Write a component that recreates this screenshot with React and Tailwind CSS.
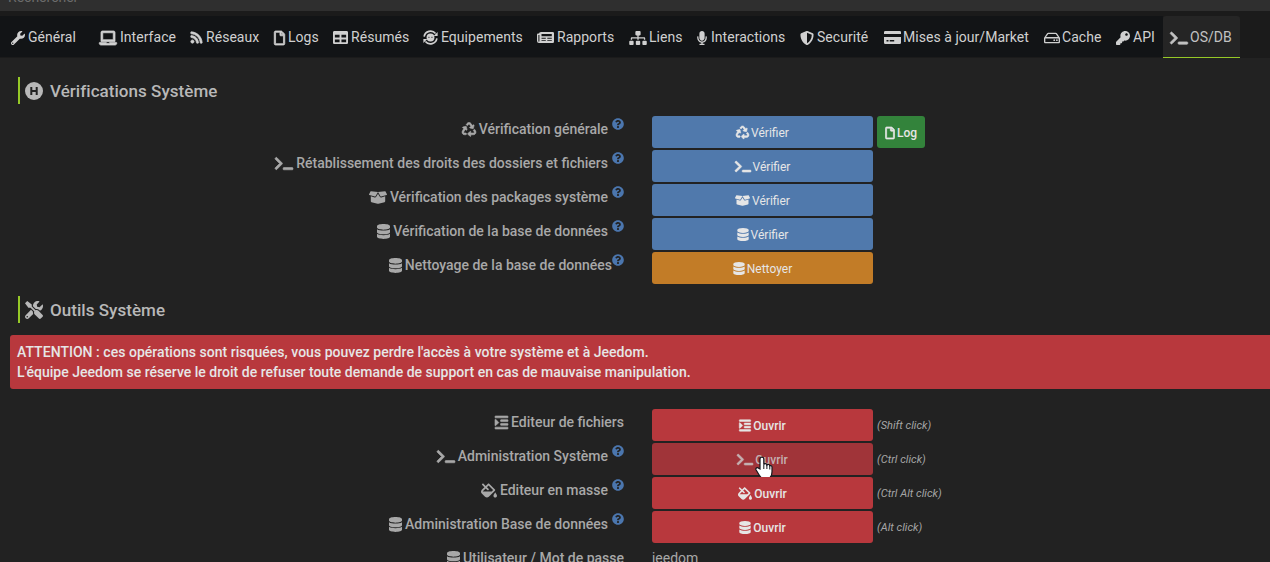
import React from "react";
import {
  FaWrench, FaLaptop, FaRss, FaRegFile, FaTable, FaSitemap,
  FaMicrophone, FaShieldAlt, FaRegHdd, FaKey, FaTerminal,
  FaRecycle, FaBoxOpen, FaDatabase, FaIndent, FaFillDrip, FaQuestionCircle, FaTools,
} from "react-icons/fa";

function Equip({ className }) {
  return (
    <svg viewBox="0 0 16 16" className={className} fill="none" stroke="currentColor" strokeWidth="1.8">
      <path d="M1.200 7A6.900 6.900 0 0 1 13.400 3.800M14.800 9A6.900 6.900 0 0 1 2.600 12.200" />
      <path d="M15.600 2.200v4.200h-4.200zM.4 13.800V9.600h4.200z" fill="currentColor" stroke="none" />
      <circle cx="8" cy="8" r="4.200" fill="currentColor" stroke="none" />
      <path d="M5.500 7.800h1.600M8.700 7.800h1.600" stroke="#121416" strokeWidth="0.7" />
    </svg>
  );
}

function Newspaper({ className }) {
  return (
    <svg viewBox="0 0 17 13" className={className} fill="currentColor">
      <path fillRule="evenodd" d="M4 1h11.700Q17 1 17 2.300v8.400q0 1.300-1.300 1.300H2Q0 12 0 10V3.500Q0 2.500 1 2.500h1Q2 1 4 1zM1.400 4v6q0 .7.500.7t.5-.7V4zM4.500 3v2.200h10.300V3zM4.500 6.800v.9h4.300v-.9zM10.300 6.800v.9h4.500v-.9zM4.500 9.200v.9h4.300v-.9zM10.300 9.200v.9h4.500v-.9z" />
    </svg>
  );
}

function Card({ className }) {
  return (
    <svg viewBox="0 0 17 13" className={className} fill="currentColor">
      <path d="M1.3 0h14.4Q17 0 17 1.3V3H0V1.3Q0 0 1.3 0zM0 6h17v5.7q0 1.3-1.3 1.3H1.3Q0 13 0 11.700zM2.500 9v1.400h2V9zm3.200 0v1.400h4.500V9z" fillRule="evenodd" />
    </svg>
  );
}

function CircleH({ className }) {
  return (
    <svg viewBox="0 0 18 18" className={className}>
      <circle cx="9" cy="9" r="9" fill="currentColor" />
      <path d="M6.300 5v8M11.700 5v8M6.300 9h5.400" stroke="#222" strokeWidth="2" fill="none" />
    </svg>
  );
}

const tabs = [
  { t: "Général", I: FaWrench, w: "w-[88px]", i: "w-[17px]", s: "size-[14px]" },
  { t: "Interface", I: FaLaptop, w: "w-[91px]", i: "w-[21px]", s: "w-[18px] h-[14px]", heavy: true },
  { t: "Réseaux", I: FaRss, w: "w-[84px]", i: "w-[16px]", s: "size-[13px]", heavy: true },
  { t: "Logs", I: FaRegFile, w: "w-[59px]", i: "w-[14px]", s: "w-[11px] h-[14px]", heavy: true },
  { t: "Résumés", I: FaTable, w: "w-[90px]", i: "w-[18px]", s: "size-[15px]" },
  { t: "Equipements", I: Equip, w: "w-[114px]", i: "w-[18px]", s: "size-[15px]" },
  { t: "Rapports", I: Newspaper, w: "w-[92px]", i: "w-[20px]", s: "w-[17px] h-[13px]" },
  { t: "Liens", I: FaSitemap, w: "w-[68px]", i: "w-[20px]", s: "w-[18px] h-[14px]" },
  { t: "Interactions", I: FaMicrophone, w: "w-[103px]", i: "w-[14px]", s: "w-[10px] h-[14px]" },
  { t: "Securité", I: FaShieldAlt, w: "w-[84px]", i: "w-[17px]", s: "size-[14px]" },
  { t: "Mises à jour/Market", I: Card, w: "w-[160px]", i: "w-[19px]", s: "w-[17px] h-[13px]" },
  { t: "Cache", I: FaRegHdd, w: "w-[72px]", i: "w-[18px]", s: "w-[16px] h-[16px]" },
  { t: "API", I: FaKey, w: "w-[54px]", i: "w-[17px]", s: "size-[14px]" },
  { t: "OS/DB", I: FaTerminal, w: "w-[77px]", i: "w-[20px]", s: "w-[18px] h-[14px]", active: true, heavy: true },
];

const checks = [
  { l: "Vérification générale", I: FaRecycle, b: "Vérifier", c: "bg-[#5079ac]", s: "w-[14px]", bs: "w-[13px]", help: true, log: true },
  { l: "Rétablissement des droits des dossiers et fichiers", I: FaTerminal, b: "Vérifier", c: "bg-[#5079ac]", s: "w-[18px]", bs: "w-[16px]", help: true },
  { l: "Vérification des packages système", I: FaBoxOpen, b: "Vérifier", c: "bg-[#5079ac]", s: "w-[18px]", bs: "w-[15px]", help: true },
  { l: "Vérification de la base de données", I: FaDatabase, b: "Vérifier", c: "bg-[#5079ac]", s: "w-[13px]", bs: "w-[12px]", help: true },
  { l: "Nettoyage de la base de données", I: FaDatabase, b: "Nettoyer", c: "bg-[#c27c27]", s: "w-[13px]", bs: "w-[12px]", help: true, tight: true },
];

const tools = [
  { l: "Editeur de fichiers", I: FaIndent, b: "Ouvrir", c: "bg-[#b8383d]", s: "w-[13px]", bs: "w-[12px]", k: "(Shift click)", bold: true },
  { l: "Administration Système", I: FaTerminal, b: "Ouvrir", c: "bg-[#a03439] text-[#c4b0b1]", s: "w-[18px]", bs: "w-[16px]", k: "(Ctrl click)", help: true, pointer: true, bold: true },
  { l: "Editeur en masse", I: FaFillDrip, b: "Ouvrir", c: "bg-[#b8383d]", s: "w-[16px]", bs: "w-[14px]", k: "(Ctrl Alt click)", help: true, bold: true },
  { l: "Administration Base de données", I: FaDatabase, b: "Ouvrir", c: "bg-[#b8383d]", s: "w-[13px]", bs: "w-[12px]", k: "(Alt click)", help: true, bold: true },
];

function Pointer() {
  return (
    <svg viewBox="0 0 18 24" className="absolute left-[103px] top-[13px] w-[18px] h-[24px]">
      <path d="M5 13V3a1.900 1.900 0 0 1 3.800 0v5.500c.4-1.400 2.900-1.200 3.100.5.900-1 2.600-.6 2.900.8 1-.5 2.200 0 2.200 1.400v4.500c0 4.600-2.400 7.300-7 7.300-3.500 0-4.700-1.700-6-4.200L1 13.800c-.8-1.700 1.400-2.900 2.600-1.600z" fill="#fff" stroke="#16161c" strokeWidth="1.200" />
      <path d="M8.800 8.500v4.500M11.900 9v4M14.800 10v3.500" stroke="#16161c" strokeWidth="1" />
    </svg>
  );
}

function strokeFor(I) {
  return I === FaTerminal || I === FaRecycle || I === FaIndent
    ? "stroke-current [stroke-width:22px] overflow-visible"
    : "[stroke-width:0px]";
}

function Label({ r }) {
  return (
    <div className="flex w-[624px] shrink-0 items-center justify-end h-5 mt-[3px] text-[14px] font-medium text-[#a8a8a8] whitespace-nowrap">
      <r.I className={`h-[15px] shrink-0 mr-[3px] ${strokeFor(r.I)} ${r.s}`} />
      <span>{r.l}</span>
      {r.help && <FaQuestionCircle className={`size-3 mb-[11px] text-[#4b76ae] ${r.tight ? "" : "ml-1"}`} />}
    </div>
  );
}

function Row({ r }) {
  return (
    <div className="flex h-[34px]">
      <Label r={r} />
      <div className={`relative ml-7 flex h-8 w-[221px] shrink-0 items-center justify-center rounded-[3px] pt-px text-[12px] ${r.bold ? "font-medium" : ""} ${r.c}`}>
        <r.I className={`h-[13px] shrink-0 mr-[2px] ${strokeFor(r.I)} ${r.bs}`} />
        <span>{r.b}</span>
        {r.pointer && <Pointer />}
      </div>
      {r.log && (
        <div className="ml-1 flex h-8 w-12 items-center justify-center rounded-[3px] bg-[#33833b] pt-px text-[12px] font-medium">
          <FaRegFile className="mr-[2px] h-3 w-[10px] stroke-current [stroke-width:30px] overflow-visible" />
          <span>Log</span>
        </div>
      )}
      {r.k && <span className="ml-1 mt-[9px] h-4 text-[11px] leading-4 italic text-[#a6a6a6] tracking-[0.03px]">{r.k}</span>}
    </div>
  );
}

function Legend({ I, children }) {
  return (
    <div className="ml-[18px] flex h-[27px] items-center border-l-2 border-[#96c927] pl-[5px] text-[17px] font-medium text-[#b8b8b8]">
      <I className="size-[18px] mr-[7px]" />
      <span className="pt-[2px] tracking-[0.04px]">{children}</span>
    </div>
  );
}

export default function App() {
  return (
    <div className="h-[562px] w-[1270px] overflow-hidden bg-[#222] font-['Roboto',sans-serif] text-[#e6e6e6]">
      <div className="h-[11px] overflow-hidden bg-[#2f2f2f] pl-2">
        <div className="-mt-[11px] text-[14px] leading-4 text-[#6c6c6c]">Rechercher</div>
      </div>
      <div className="h-[5px] bg-[#1b1b1b]" />
      <div className="flex h-[42px] bg-[#1b1b1b]">
        <div className="mb-px w-1 bg-[#121416]" />
        {tabs.map((t) => (
          <div key={t.t} className={`flex shrink-0 items-center pl-[7px] pt-[2px] text-[14px] whitespace-nowrap ${t.w} ${t.active ? "rounded-t-[3px] border-b border-[#96c927] bg-[#252525] text-[#c2c2c2]" : "mb-px bg-[#121416] text-[#d0d0d0]"}`}>
            <span className={`flex shrink-0 ${t.i}`}>
              <t.I className={`${t.s} ${t.heavy ? "stroke-current [stroke-width:28px] overflow-visible" : ""}`} />
            </span>
            <span className="tracking-[0.04px]">{t.t}</span>
          </div>
        ))}
      </div>
      <div className="h-[19px]" />
      <Legend I={CircleH}>Vérifications Système</Legend>
      <div className="pt-3">{checks.map((r) => <Row key={r.l} r={r} />)}</div>
      <div className="h-[10px]" />
      <Legend I={FaTools}>Outils Système</Legend>
      <div className="ml-[10px] mt-3 h-[54px] rounded-l-[3px] bg-[#b8383d] pl-[7px] pt-[7px] text-[14px] leading-5 font-medium">
        <p className="tracking-[0.03px]">ATTENTION : ces opérations sont risquées, vous pouvez perdre l'accès à votre système et à Jeedom.</p>
        <p className="tracking-[0.01px]">L'équipe Jeedom se réserve le droit de refuser toute demande de support en cas de mauvaise manipulation.</p>
      </div>
      <div className="pt-5">{tools.map((r) => <Row key={r.l} r={r} />)}</div>
      <div className="flex">
        <Label r={{ l: "Utilisateur / Mot de passe", I: FaDatabase, s: "w-[13px]" }} />
        <span className="ml-7 mt-[3px] text-[14px] leading-5 text-[#a8a8a8]">jeedom</span>
      </div>
    </div>
  );
}
